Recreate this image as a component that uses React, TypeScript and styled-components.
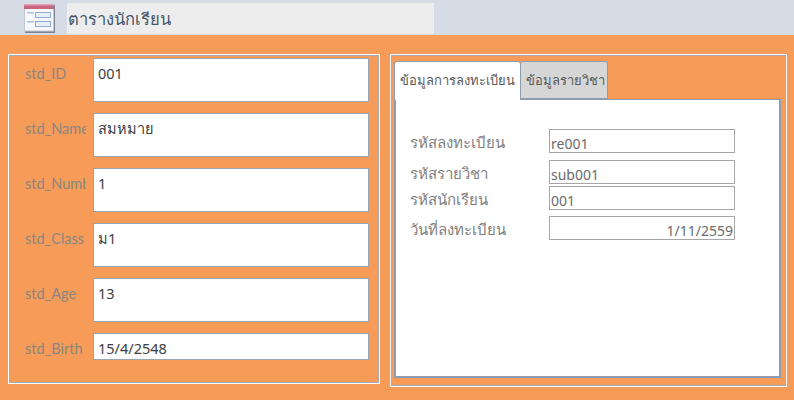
import React from "react";
import styled, { createGlobalStyle } from "styled-components";

const GlobalStyle = createGlobalStyle`
  html, body {
    margin: 0;
    padding: 0;
    background: #f69c58;
    font-family: "Noto Sans", "Open Sans", sans-serif;
  }
`;

const Page = styled.div`
  width: 794px;
  height: 400px;
  overflow: hidden;
  background: #f69c58;
`;

const Header = styled.header`
  height: 35px;
  background: #d6dce5;
  display: flex;
  align-items: flex-start;
  padding: 3px 0 0 24px;
  box-sizing: border-box;
`;

const LogoWrap = styled.div`
  width: 32px;
  height: 30px;
  margin-right: 11px;
  flex-shrink: 0;
`;

const TitleBox = styled.div`
  width: 367px;
  height: 31px;
  background: #ededed;
  color: #44546a;
  font-size: 16.5px;
  line-height: 31px;
  padding-left: 1px;
  box-sizing: border-box;
`;

const Body = styled.main`
  display: flex;
  align-items: flex-start;
  gap: 10px;
  padding: 19px 0 0 8px;
`;

const LeftPanel = styled.section`
  width: 372px;
  height: 330px;
  box-sizing: border-box;
  border: 1px solid #ffffff;
  box-shadow: inset 0 0 0 1px #a3abb8;
  padding: 3px 10px 0 11px;
  display: flex;
  flex-direction: column;
  gap: 11px;
`;

const Row = styled.div`
  display: flex;
  align-items: flex-start;
`;

const FieldLabel = styled.div`
  width: 66px;
  margin-right: 7px;
  overflow: hidden;
  white-space: nowrap;
  color: #8a8580;
  font-family: "Lato", sans-serif;
  font-size: 14.5px;
  line-height: 20px;
  padding: 6px 0 0 5px;
  box-sizing: border-box;
  flex-shrink: 0;
`;

const FieldInput = styled.div<{ $short?: boolean }>`
  width: 276px;
  height: ${(p) => (p.$short ? "27px" : "44px")};
  box-sizing: border-box;
  background: #ffffff;
  border: 1px solid #9aa5b2;
  color: #404040;
  font-size: 14.5px;
  line-height: 20px;
  padding: 4px 4px 0;
`;

const RightPanel = styled.section`
  width: 397px;
  height: 333px;
  box-sizing: border-box;
  border: 1px solid #ffffff;
  box-shadow: inset 0 0 0 1px #a3abb8;
  padding: 6px 5px 8px 3px;
  display: flex;
  flex-direction: column;
`;

const TabStrip = styled.div`
  display: flex;
  height: 39px;
  flex-shrink: 0;
  position: relative;
  z-index: 1;
`;

const Tab = styled.div<{ $active?: boolean }>`
  box-sizing: border-box;
  height: ${(p) => (p.$active ? "39px" : "38px")};
  width: ${(p) => (p.$active ? "126px" : "88px")};
  border: 1px solid #8c9db3;
  border-bottom: ${(p) => (p.$active ? "none" : "1px solid #8c9db3")};
  border-right: ${(p) => (p.$active ? "none" : "1px solid #8c9db3")};
  border-radius: 3px 3px 0 0;
  background: ${(p) => (p.$active ? "#ffffff" : "#d6d6d6")};
  color: #595959;
  font-size: 13px;
  line-height: 36px;
  white-space: nowrap;
  padding: 0 0 0 5px;
`;

const TabPage = styled.div`
  flex: 1;
  margin-top: -1px;
  background: #ffffff;
  border: 2px solid #8c9db3;
  border-top-width: 1px;
  padding: 29px 0 0 14px;
  display: flex;
  flex-direction: column;
  box-sizing: border-box;
`;

const RegRow = styled.div<{ $gap: number }>`
  display: flex;
  align-items: flex-start;
  margin-bottom: ${(p) => p.$gap}px;
`;

const RegLabel = styled.div`
  width: 139px;
  color: #7f7f7f;
  font-size: 15px;
  line-height: 20px;
  padding-top: 3px;
  white-space: nowrap;
  flex-shrink: 0;
`;

const RegInput = styled.div<{ $right?: boolean }>`
  width: 186px;
  height: 24px;
  box-sizing: border-box;
  border: 1px solid #a6a6a6;
  background: #ffffff;
  color: #6b6b6b;
  font-size: 14px;
  line-height: 20px;
  padding: 4px 1px 0;
  text-align: ${(p) => (p.$right ? "right" : "left")};
`;

const students = [
  { label: "std_ID", value: "001" },
  { label: "std_Name", value: "สมหมาย" },
  { label: "std_Number", value: "1" },
  { label: "std_Class", value: "ม1" },
  { label: "std_Age", value: "13" },
  { label: "std_Birth", value: "15/4/2548", short: true },
];

const regs = [
  { label: "รหัสลงทะเบียน", value: "re001", gap: 7 },
  { label: "รหัสรายวิชา", value: "sub001", gap: 2 },
  { label: "รหัสนักเรียน", value: "001", gap: 6 },
  { label: "วันที่ลงทะเบียน", value: "1/11/2559", gap: 0, right: true },
];

const TableIcon = () => (
  <svg width="32" height="30" viewBox="0 0 32 30">
    <rect x="1" y="2" width="30" height="28" fill="#7d8492" />
    <rect x="0.5" y="1.5" width="29" height="26.5" fill="#f6f8fb" stroke="#c3c7d0" strokeWidth="1" />
    <rect x="0" y="1" width="30" height="5" fill="#c9657f" />
    <rect x="0" y="1" width="30" height="1.5" fill="#e3a3b3" />
    <rect x="3" y="9" width="7" height="1.5" fill="#a9c0de" />
    <rect x="3" y="18" width="7" height="1.5" fill="#a9c0de" />
    <rect x="11.5" y="9.5" width="15" height="5" fill="#e6eef8" stroke="#8fadd2" />
    <rect x="11.5" y="18.5" width="15" height="5" fill="#e6eef8" stroke="#8fadd2" />
  </svg>
);

export default function App() {
  return (
    <Page>
      <GlobalStyle />
      <Header>
        <LogoWrap>
          <TableIcon />
        </LogoWrap>
        <TitleBox>ตารางนักเรียน</TitleBox>
      </Header>
      <Body>
        <LeftPanel>
          {students.map((s) => (
            <Row key={s.label}>
              <FieldLabel>{s.label}</FieldLabel>
              <FieldInput $short={s.short}>{s.value}</FieldInput>
            </Row>
          ))}
        </LeftPanel>
        <RightPanel>
          <TabStrip>
            <Tab $active>ข้อมูลการลงทะเบียน</Tab>
            <Tab>ข้อมูลรายวิชา</Tab>
          </TabStrip>
          <TabPage>
            {regs.map((r) => (
              <RegRow key={r.label} $gap={r.gap}>
                <RegLabel>{r.label}</RegLabel>
                <RegInput $right={r.right}>{r.value}</RegInput>
              </RegRow>
            ))}
          </TabPage>
        </RightPanel>
      </Body>
    </Page>
  );
}
